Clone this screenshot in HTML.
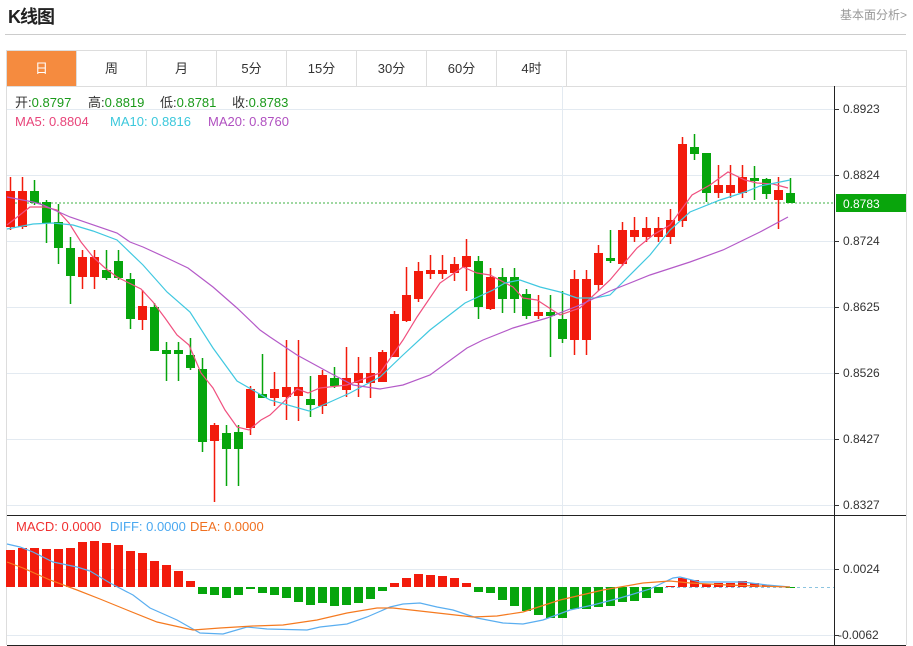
<!DOCTYPE html>
<html><head><meta charset="utf-8"><style>
body{margin:0;width:913px;height:646px;background:#fff;font-family:"Liberation Sans","Noto Sans CJK SC",sans-serif;position:relative;overflow:hidden}
.t{position:absolute;left:8px;top:3px;font-size:18px;font-weight:bold;color:#222;letter-spacing:-1px}
.r{position:absolute;right:6px;top:6px;font-size:12px;color:#999}
.sep{position:absolute;left:5px;top:34px;width:901px;height:1px;background:#ccc}
.tabs{position:absolute;left:6px;top:50px;width:899px;height:35px;border:1px solid #ddd;display:flex}
.tabs div{width:69px;border-right:1px solid #ddd;text-align:center;line-height:35px;font-size:13px;color:#333}
.tabs div.a{background:#f58b3f;color:#fff}
svg{position:absolute;left:0;top:0}
</style></head><body>
<div class="t">K线图</div><div class="r">基本面分析&gt;</div>
<div class="sep"></div>
<div class="tabs"><div class="a">日</div><div>周</div><div>月</div><div>5分</div><div>15分</div><div>30分</div><div>60分</div><div>4时</div></div>
<svg id="s" width="913" height="646" style="top:0" xmlns="http://www.w3.org/2000/svg" font-family="Liberation Sans, Noto Sans CJK SC, sans-serif">
<g stroke="#e3eaf1" stroke-width="1">
<line x1="7" y1="109.5" x2="834" y2="109.5"/><line x1="7" y1="175.5" x2="834" y2="175.5"/><line x1="7" y1="241.5" x2="834" y2="241.5"/><line x1="7" y1="307.5" x2="834" y2="307.5"/><line x1="7" y1="373.5" x2="834" y2="373.5"/><line x1="7" y1="439.5" x2="834" y2="439.5"/><line x1="7" y1="505.5" x2="834" y2="505.5"/>
<line x1="7" y1="569.5" x2="834" y2="569.5"/><line x1="7" y1="635.5" x2="834" y2="635.5"/>
<line x1="562.5" y1="86" x2="562.5" y2="645"/>
</g>
<line x1="6.5" y1="86" x2="6.5" y2="645" stroke="#ddd"/>
<line x1="906.5" y1="86" x2="906.5" y2="645" stroke="#ddd"/>
<line x1="834.5" y1="86" x2="834.5" y2="645" stroke="#222"/>
<line x1="7" y1="515.5" x2="906" y2="515.5" stroke="#222"/>
<line x1="7" y1="645.5" x2="906" y2="645.5" stroke="#222"/>
<g font-size="12" fill="#333">
<text x="843" y="113">0.8923</text><text x="843" y="179">0.8824</text><text x="843" y="245">0.8724</text><text x="843" y="311">0.8625</text><text x="843" y="377">0.8526</text><text x="843" y="443">0.8427</text><text x="843" y="509">0.8327</text>
<text x="843" y="573">0.0024</text><text x="838" y="639">-0.0062</text>
</g>
<g stroke="#333"><line x1="834" y1="109.5" x2="839" y2="109.5"/><line x1="834" y1="175.5" x2="839" y2="175.5"/><line x1="834" y1="241.5" x2="839" y2="241.5"/><line x1="834" y1="307.5" x2="839" y2="307.5"/><line x1="834" y1="373.5" x2="839" y2="373.5"/><line x1="834" y1="439.5" x2="839" y2="439.5"/><line x1="834" y1="505.5" x2="839" y2="505.5"/><line x1="834" y1="569.5" x2="839" y2="569.5"/><line x1="834" y1="635.5" x2="839" y2="635.5"/></g>
<line x1="7" y1="203" x2="834" y2="203" stroke="#3cb043" stroke-dasharray="2,2"/>
<rect x="836" y="194" width="70" height="18" fill="#09a50c"/>
<text x="843" y="208" font-size="12" fill="#fff">0.8783</text>
<line x1="587" y1="587.5" x2="834" y2="587.5" stroke="#8cc4e0" stroke-dasharray="3,3"/>
<g id="cd"></g><g id="mb"></g>
<g fill="none" stroke-width="1.2">
<polyline stroke="#f0507f" points="7,225 30,207 45,207 57,210 69,223 81,242 93,257 105,268 117,277 129,283 141,289 153,302 165,318 177,335 189,345 201,373 213,388 225,410 237,427 249,430 261,420 270,415 297,389 308,393 320,388 347,385 380,373 403,340 417,317 440,283 463,267 477,273 490,275 513,287 523,298 537,300 560,315 580,308 610,280 637,248 653,235 670,225 692,195 710,185 728,172 745,180 757,183 773,184 788,188"/>
<polyline stroke="#40c8e0" points="7,229 33,224 53,223 73,225 93,231 117,240 143,265 167,292 190,312 213,348 237,381 270,400 309,411 330,402 350,393 380,377 403,355 430,330 465,303 493,290 505,283 520,280 540,287 560,292 577,298 595,298 610,295 650,255 670,230 690,212 720,200 745,192 760,186 790,180"/>
<polyline stroke="#b45ac8" points="7,197 33,202 43,205 70,217 117,233 130,242 143,247 167,258 188,268 213,287 237,308 260,330 270,337 297,355 330,373 353,385 380,389 403,385 430,375 467,348 483,340 513,328 547,318 580,305 610,291 650,275 690,262 723,250 760,232 788,217"/>
<polyline stroke="#5aaef0" points="7,544 20,547 33,552 53,562 77,567 90,571 110,583 133,595 150,608 177,620 200,633 223,634 247,627 267,629 307,630 320,627 347,624 367,617 390,607 403,604 420,603 437,607 453,610 477,618 503,623 523,624 543,620 570,610 593,605 620,598 650,589 673,578 680,577 700,582 743,582 767,585 790,587"/>
<polyline stroke="#f57a20" points="7,562 23,568 50,580 77,590 100,599 127,610 157,622 193,630 220,628 253,626 283,625 317,620 347,613 377,608 393,608 420,611 473,617 497,616 523,612 560,600 603,590 643,583 670,581 690,583 727,585 790,587"/>
</g>
<g font-size="13">
<text x="15" y="107" fill="#333">开:<tspan fill="#1a9a1a">0.8797</tspan></text>
<text x="88" y="107" fill="#333">高:<tspan fill="#1a9a1a">0.8819</tspan></text>
<text x="160" y="107" fill="#333">低:<tspan fill="#1a9a1a">0.8781</tspan></text>
<text x="232" y="107" fill="#333">收:<tspan fill="#1a9a1a">0.8783</tspan></text>
<text x="15" y="126" fill="#e8457a">MA5: 0.8804</text><text x="110" y="126" fill="#3cc8dc">MA10: 0.8816</text><text x="208" y="126" fill="#b050c0">MA20: 0.8760</text>
<text x="16" y="531" fill="#f03030">MACD: 0.0000</text><text x="110" y="531" fill="#4aa8f0">DIFF: 0.0000</text><text x="190" y="531" fill="#f07020">DEA: 0.0000</text>
</g>
</svg>
<script>
var R="#f21b0c",G="#06a50c";
var c=[[10,177,230,191,227,R],[22,177,229,191,227,R],[34,180,205,191,203,G],[46,200,243,202,223,G],[58,204,264,222,248,G],[70,237,304,248,276,G],[82,250,289,257,277,R],[94,250,289,257,277,R],[106,250,280,270,278,G],[118,250,280,261,278,G],[130,273,329,279,319,G],[142,290,330,306,320,R],[154,303,351,307,351,G],[166,342,381,350,354,G],[178,342,381,350,354,G],[190,338,370,355,368,G],[202,358,452,369,442,G],[214,423,502,425,441,R],[226,425,486,433,449,G],[238,425,486,432,449,G],[250,386,435,389,428,R],[262,354,398,394,398,G],[274,372,406,389,398,R],[286,340,420,387,397,R],[298,340,421,387,396,R],[310,376,417,399,405,G],[322,370,414,375,406,R],[334,367,388,378,386,G],[346,347,397,378,390,R],[358,357,397,373,383,R],[370,357,398,373,383,R],[382,350,382,352,382,R],[394,311,357,314,357,R],[406,267,322,295,321,R],[418,262,302,271,299,R],[430,255,279,270,274,R],[442,255,279,270,274,R],[454,257,281,264,273,R],[466,239,291,256,267,R],[478,256,319,261,307,G],[490,268,310,277,309,R],[502,268,313,277,299,G],[514,268,313,277,299,G],[526,289,319,294,316,G],[538,295,319,312,316,R],[550,295,357,312,316,G],[562,291,343,319,339,G],[574,270,355,279,340,R],[586,270,355,279,340,R],[598,245,291,253,285,R],[610,230,263,258,261,G],[622,222,266,230,264,R],[634,217,242,230,237,R],[646,217,242,228,237,R],[658,217,242,228,237,R],[670,209,244,220,237,R],[682,137,227,144,221,R],[694,134,160,147,154,G],[706,153,202,153,193,G],[718,165,198,185,193,R],[730,165,198,185,193,R],[742,165,198,177,193,R],[754,166,200,178,181,G],[766,178,199,179,194,G],[778,177,229,190,200,R],[790,178,203,193,203,G]];
var s="";c.forEach(function(a){s+='<line x1="'+(a[0]+.5)+'" y1="'+a[1]+'" x2="'+(a[0]+.5)+'" y2="'+a[2]+'" stroke="'+a[5]+'" stroke-width="1.5"/><rect x="'+(a[0]-4)+'" y="'+a[3]+'" width="9" height="'+Math.max(2,a[4]-a[3])+'" fill="'+a[5]+'"/>';});
document.getElementById("cd").innerHTML=s;
var m=[550,548,548,549,549,548,542,541,543,545,551,553,561,565,571,581,594,595,598,595,589,593,595,598,602,605,603,606,605,603,599,591,583,578,574,575,576,578,583,592,593,600,606,611,615,618,618,609,609,607,606,602,601,598,593,586,578,580,584,583,583,581,583,585,586,587];
var z=587,t="";m.forEach(function(v,i){var x=10+i*12;var y=Math.min(v,z),h=Math.abs(v-z);if(h<1)h=1;t+='<rect x="'+(x-4)+'" y="'+y+'" width="9" height="'+h+'" fill="'+(v<z?R:G)+'"/>';});
document.getElementById("mb").innerHTML=t;
</script>
</body></html>
